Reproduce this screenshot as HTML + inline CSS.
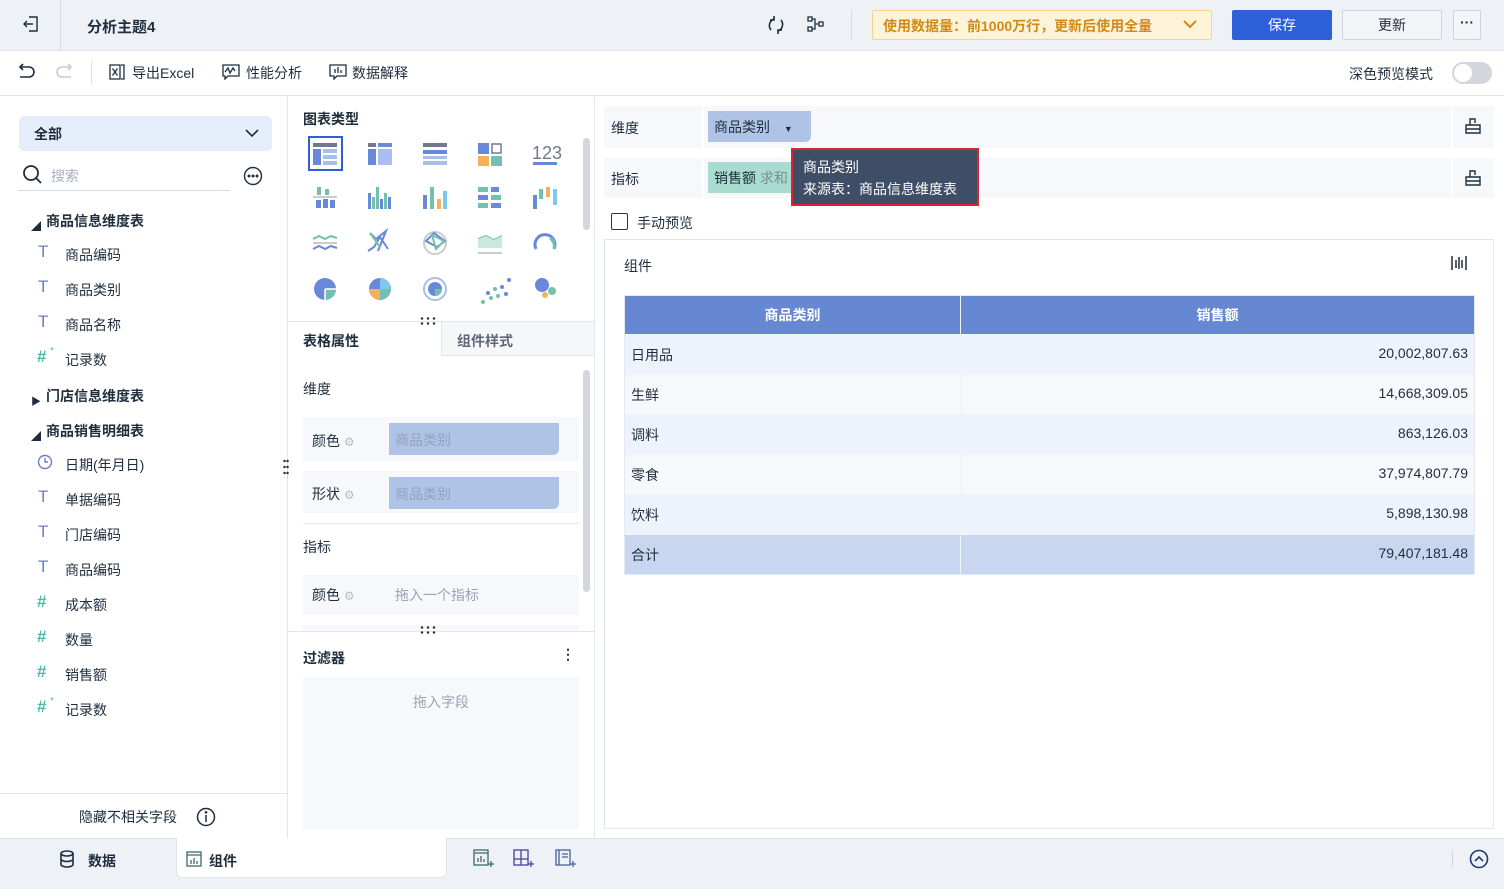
<!DOCTYPE html>
<html><head><meta charset="utf-8">
<style>
*{margin:0;padding:0;box-sizing:border-box}
body{width:1504px;height:889px;position:relative;overflow:hidden;background:#fff;font-family:"Liberation Sans","Noto Sans CJK SC",sans-serif;font-size:14px;color:#1f2d3d}
.a{position:absolute}
.b{font-weight:bold}
.t{white-space:nowrap}
svg{display:block}
</style></head><body>
<!-- top bar -->
<div class="a" style="left:0;top:0;width:1504px;height:51px;background:#eef1f6;border-bottom:1px solid #dfe3ea"></div>
<svg class="a" style="left:22px;top:15px" width="18" height="18" viewBox="0 0 18 18" fill="none" stroke="#1f2d3d" stroke-width="1.4"><path d="M7 2h8v14H7M11 9H2M5 6L2 9l3 3"/></svg>
<div class="a" style="left:60px;top:0;width:1px;height:50px;background:#d6dbe3"></div>
<div class="a b t" style="left:87px;top:16px;font-size:15px">分析主题4</div>
<svg class="a" style="left:766px;top:15px" width="20" height="20" viewBox="0 0 20 20" fill="none" stroke="#1f2d3d" stroke-width="1.6"><path d="M15 5a7 7 0 0 1-3 11M5 15A7 7 0 0 1 8 4"/><path d="M8 1v4H4M12 19v-4h4"/></svg>
<svg class="a" style="left:806px;top:15px" width="20" height="18" viewBox="0 0 20 18" fill="none" stroke="#1f2d3d" stroke-width="1.3"><rect x="2" y="2" width="4" height="4"/><rect x="2" y="12" width="4" height="4"/><rect x="13" y="7" width="4" height="4"/><path d="M6 4h3v10H6M9 9h4"/></svg>
<div class="a" style="left:851px;top:10px;width:1px;height:30px;background:#d6dbe3"></div>
<div class="a t" style="left:872px;top:10px;width:340px;height:30px;background:#fdf3d9;border:1px solid #f5d58a;border-radius:2px;color:#d28a17;font-weight:bold;padding:5px 0 0 10px;font-size:14px">使用数据量：前1000万行，更新后使用全量
<svg class="a" style="left:310px;top:9px" width="14" height="10" viewBox="0 0 14 10" fill="none" stroke="#d28a17" stroke-width="2"><path d="M1 1l6 6 6-6"/></svg></div>
<div class="a t" style="left:1232px;top:10px;width:100px;height:30px;background:#2c5fd8;border-radius:2px;color:#fff;text-align:center;line-height:30px">保存</div>
<div class="a t" style="left:1342px;top:10px;width:100px;height:30px;background:#f3f5f8;border:1px solid #cfd4dc;border-radius:2px;text-align:center;line-height:28px">更新</div>
<div class="a t" style="left:1453px;top:10px;width:28px;height:30px;background:#f3f5f8;border:1px solid #cfd4dc;border-radius:2px;text-align:center;line-height:22px;font-weight:bold">···</div>
<!-- toolbar -->
<div class="a" style="left:0;top:95px;width:1504px;height:1px;background:#e2e6ec"></div>
<svg class="a" style="left:16px;top:63px" width="20" height="18" viewBox="0 0 20 18" fill="none" stroke="#1f2d3d" stroke-width="1.6"><path d="M5 4h8a5 5 0 0 1 0 10H4M7 1L4 4l3 3"/></svg>
<svg class="a" style="left:55px;top:63px" width="20" height="18" viewBox="0 0 20 18" fill="none" stroke="#c8ccd3" stroke-width="1.6"><path d="M15 4H7a5 5 0 0 0 0 10h9M13 1l3 3-3 3"/></svg>
<div class="a" style="left:91px;top:61px;width:1px;height:24px;background:#dfe3ea"></div>
<svg class="a" style="left:109px;top:64px" width="16" height="16" viewBox="0 0 16 16" fill="none" stroke="#1f2d3d" stroke-width="1.3"><path d="M1 1h10v14H1zM12 1h3v14h-3M3.5 4.5l5 7M8.5 4.5l-5 7"/></svg>
<div class="a t" style="left:132px;top:63px">导出Excel</div>
<svg class="a" style="left:222px;top:64px" width="18" height="16" viewBox="0 0 18 16" fill="none" stroke="#1f2d3d" stroke-width="1.3"><path d="M1 1h16v11H6l-3 3v-3H1z"/><path d="M3 8l3-4 2 5 3-5 2 3"/></svg>
<div class="a t" style="left:246px;top:63px">性能分析</div>
<svg class="a" style="left:329px;top:64px" width="18" height="16" viewBox="0 0 18 16" fill="none" stroke="#1f2d3d" stroke-width="1.3"><path d="M1 1h16v11H8l-3 3v-3H1z"/><path d="M6 5v4M9 3v6M12 6v3"/></svg>
<div class="a t" style="left:352px;top:63px">数据解释</div>
<div class="a t" style="left:1349px;top:64px">深色预览模式</div>
<div class="a" style="left:1452px;top:62px;width:40px;height:22px;background:#d3d6dc;border-radius:11px"><div class="a" style="left:2px;top:2px;width:18px;height:18px;border-radius:9px;background:#fff"></div></div>
<!-- left panel -->
<div class="a" style="left:287px;top:96px;width:1px;height:742px;background:#e2e6ec"></div>
<div class="a b" style="left:19px;top:116px;width:253px;height:35px;background:#e5edfb;border-radius:5px;padding:8px 0 0 15px">全部
<svg class="a" style="left:226px;top:13px" width="14" height="9" viewBox="0 0 14 9" fill="none" stroke="#1f2d3d" stroke-width="1.6"><path d="M1 1l6 6 6-6"/></svg></div>
<svg class="a" style="left:22px;top:164px" width="22" height="22" viewBox="0 0 22 22" fill="none" stroke="#1f2d3d" stroke-width="1.8"><circle cx="9" cy="9" r="7"/><path d="M14 14l5 5"/></svg>
<div class="a t" style="left:51px;top:166px;color:#a7afbd">搜索</div>
<div class="a" style="left:18px;top:190px;width:212px;height:1px;background:#d8dce3"></div>
<svg class="a" style="left:243px;top:166px" width="20" height="20" viewBox="0 0 20 20" fill="none" stroke="#1f2d3d" stroke-width="1.4"><circle cx="10" cy="10" r="8.5"/><circle cx="6" cy="10" r=".8" fill="#1f2d3d"/><circle cx="10" cy="10" r=".8" fill="#1f2d3d"/><circle cx="14" cy="10" r=".8" fill="#1f2d3d"/></svg>
<div id="tree"></div>
<div class="a" style="left:0;top:793px;width:287px;height:1px;background:#e2e6ec"></div>
<div class="a t" style="left:79px;top:807px">隐藏不相关字段</div>
<svg class="a" style="left:196px;top:807px" width="20" height="20" viewBox="0 0 20 20" fill="none" stroke="#1f2d3d" stroke-width="1.5"><circle cx="10" cy="10" r="8.5"/><path d="M10 8v7"/><circle cx="10" cy="5.3" r=".6" fill="#1f2d3d"/></svg>
<div class="a" style="left:283px;top:458px;width:6px;height:20px;background:radial-gradient(circle,#333 1px,transparent 1.5px) 0 0/3px 6px"></div>
<!-- middle panel -->
<div class="a" style="left:594px;top:96px;width:1px;height:742px;background:#e2e6ec"></div>
<div class="a b t" style="left:303px;top:109px">图表类型</div>
<div class="a" style="left:308px;top:136px;width:35px;height:35px;border:2px solid #2c5fd8"></div>
<svg class="a" style="left:300px;top:135px" width="270" height="170" viewBox="0 0 270 170">
<g transform="translate(13,8)"><rect width="24" height="4" fill="#6f7a8a"/><rect y="6" width="8" height="16" fill="#6888da"/><rect x="10" y="6" width="14" height="4" fill="#a9bdee"/><rect x="10" y="12" width="14" height="4" fill="#a9bdee"/><rect x="10" y="18" width="14" height="4" fill="#a9bdee"/></g>
<g transform="translate(68,8)"><rect width="8" height="4" fill="#6f7a8a"/><rect x="10" width="14" height="4" fill="#6888da"/><rect y="6" width="8" height="16" fill="#6888da"/><rect x="10" y="6" width="14" height="16" fill="#a9bdee"/></g>
<g transform="translate(123,8)"><rect width="24" height="4" fill="#6f7a8a"/><rect y="7" width="24" height="4" fill="#6888da"/><rect y="13" width="24" height="3" fill="#a9bdee"/><rect y="18" width="24" height="4" fill="#a9bdee"/></g>
<g transform="translate(178,8)"><rect width="11" height="11" fill="#6888da"/><rect x="14" y="1" width="9" height="9" fill="none" stroke="#6f7a8a" stroke-width="1.5"/><rect y="13" width="11" height="10" fill="#f0b25a"/><rect x="13" y="13" width="11" height="10" fill="#74c0b0"/></g>
<text x="232" y="24" font-size="18" fill="#6f7a8a" font-family="Liberation Sans">123</text><rect x="233" y="27" width="24" height="3" fill="#6888da"/>
<g transform="translate(13,52)"><rect x="4" width="4" height="8" fill="#74c0b0"/><rect x="12" y="2" width="4" height="6" fill="#74c0b0"/><rect y="9" width="24" height="2" fill="#ccc"/><rect x="3" y="13" width="5" height="8" fill="#6888da"/><rect x="10" y="12" width="5" height="9" fill="#6888da"/><rect x="17" y="13" width="5" height="8" fill="#6888da"/></g>
<g transform="translate(68,52)"><rect y="6" width="3" height="16" fill="#6888da"/><rect x="4" y="10" width="3" height="12" fill="#74c0b0"/><rect x="8" width="3" height="22" fill="#74c0b0"/><rect x="12" y="12" width="3" height="10" fill="#6888da"/><rect x="16" y="6" width="3" height="16" fill="#74c0b0"/><rect x="20" y="10" width="3" height="12" fill="#6888da"/></g>
<g transform="translate(123,52)"><rect y="8" width="4" height="14" fill="#6888da"/><rect x="7" width="4" height="22" fill="#74c0b0"/><rect x="14" y="12" width="4" height="10" fill="#f0b25a"/><rect x="20" y="4" width="4" height="18" fill="#7ec7ee"/></g>
<g transform="translate(178,52)"><rect width="10" height="5" fill="#74c0b0"/><rect x="13" width="8" height="5" fill="#6888da"/><rect y="8" width="10" height="5" fill="#6888da"/><rect x="13" y="8" width="10" height="5" fill="#74c0b0"/><rect y="16" width="10" height="5" fill="#74c0b0"/><rect x="13" y="16" width="10" height="5" fill="#6888da"/></g>
<g transform="translate(233,52)"><rect y="8" width="4" height="14" fill="#6888da"/><rect x="6" y="2" width="4" height="10" fill="#74c0b0"/><rect x="13" width="4" height="10" fill="#f0b25a"/><rect x="20" y="2" width="4" height="16" fill="#7ec7ee"/></g>
<g fill="none" stroke-width="2"><path d="M13 104l6-3 6 3 6-3 6 2" stroke="#74c0b0"/><path d="M13 108h24" stroke="#ccc"/><path d="M13 114l6-3 6 3 6-3 6 2" stroke="#6888da"/>
<path d="M70 98l6 6 10-8-8 20M68 116l6-4 6-10 8 12" stroke="#6888da"/><path d="M70 98l10 14" stroke="#74c0b0"/>
<circle cx="135" cy="108" r="11" stroke="#ccc"/><path d="M126 106l8-8 11 8-8 6z" stroke="#6888da"/><path d="M132 100l4 14 8-8z" stroke="#74c0b0"/>
<path d="M178 104l8-3 8 4 8-4" stroke="#74c0b0"/><path d="M178 118h24" stroke="#ccc"/>
<path d="M236 114a10 10 0 1 1 18 0" stroke="#6888da" stroke-width="3"/><path d="M250 103a10 10 0 0 1 4 11" stroke="#74c0b0" stroke-width="3"/></g>
<path d="M178 104l8-3 8 4 8-4v12h-24z" fill="#c8e8e0"/>
<circle cx="25" cy="154" r="11" fill="#6888da"/><path d="M25 154h11a11 11 0 0 1-11 11z" fill="#74c0b0"/><path d="M25 154h11M25 154v11" stroke="#fff" stroke-width="1.5"/>
<circle cx="80" cy="154" r="11" fill="#6888da"/><path d="M80 154V143a11 11 0 0 1 11 11z" fill="#7ec7ee"/><path d="M80 154h-11a11 11 0 0 0 11 11z" fill="#f0b25a"/><path d="M80 154h11a11 11 0 0 1-11 11z" fill="#74c0b0"/>
<circle cx="135" cy="154" r="11" fill="none" stroke="#a9bdee" stroke-width="2"/><circle cx="135" cy="154" r="7" fill="#6888da"/><path d="M135 154h7a7 7 0 0 1-7 7z" fill="#74c0b0"/>
<g fill="#6888da"><circle cx="209" cy="145" r="2"/><circle cx="202" cy="152" r="2"/><circle cx="206" cy="159" r="2"/><circle cx="188" cy="158" r="2"/></g><g fill="#74c0b0"><circle cx="195" cy="154" r="2"/><circle cx="198" cy="161" r="2"/><circle cx="191" cy="163" r="2"/><circle cx="183" cy="167" r="2"/></g>
<circle cx="242" cy="150" r="7" fill="#6888da"/><circle cx="252" cy="156" r="4" fill="#74c0b0"/><circle cx="245" cy="160" r="3" fill="#f0b25a"/>
</svg>
<div class="a" style="left:583px;top:138px;width:7px;height:92px;background:#d3d6dc;border-radius:4px"></div>
<div class="a" style="left:288px;top:321px;width:306px;height:1px;background:#e2e6ec"></div>
<div class="a" style="left:419px;top:316px;width:18px;height:10px;background:radial-gradient(circle,#333 1px,transparent 1.5px) 0 0/6px 5px"></div>
<div class="a" style="left:441px;top:322px;width:153px;height:34px;background:#f5f7fa;border-left:1px solid #e2e6ec;border-bottom:1px solid #e2e6ec"></div>
<div class="a b t" style="left:303px;top:331px">表格属性</div>
<div class="a b t" style="left:457px;top:331px;color:#5e6878">组件样式</div>
<div class="a t" style="left:303px;top:379px">维度</div>
<div class="a" style="left:303px;top:417px;width:276px;height:44px;background:#f7f8fb"></div>
<div class="a t" style="left:312px;top:431px">颜色 <span style="color:#bbb;font-size:12px">⚙</span></div>
<div class="a t" style="left:389px;top:423px;width:170px;height:32px;background:#aec3e6;border-radius:0 0 6px 0;color:#93a3bd;padding:7px 0 0 6px">商品类别</div>
<div class="a" style="left:303px;top:471px;width:276px;height:42px;background:#f7f8fb"></div>
<div class="a t" style="left:312px;top:484px">形状 <span style="color:#bbb;font-size:12px">⚙</span></div>
<div class="a t" style="left:389px;top:477px;width:170px;height:32px;background:#aec3e6;border-radius:0 0 6px 0;color:#93a3bd;padding:7px 0 0 6px">商品类别</div>
<div class="a" style="left:303px;top:523px;width:276px;height:1px;background:#e2e6ec"></div>
<div class="a t" style="left:303px;top:537px">指标</div>
<div class="a" style="left:303px;top:575px;width:276px;height:40px;background:#f7f8fb"></div>
<div class="a t" style="left:312px;top:585px">颜色 <span style="color:#bbb;font-size:12px">⚙</span></div>
<div class="a t" style="left:395px;top:585px;color:#9aa3b2">拖入一个指标</div>
<div class="a" style="left:303px;top:625px;width:276px;height:6px;background:#f7f8fb"></div>
<div class="a" style="left:583px;top:370px;width:7px;height:222px;background:#d3d6dc;border-radius:4px"></div>
<div class="a" style="left:288px;top:631px;width:306px;height:1px;background:#e2e6ec"></div>
<div class="a" style="left:419px;top:625px;width:18px;height:10px;background:radial-gradient(circle,#333 1px,transparent 1.5px) 0 0/6px 5px"></div>
<div class="a b t" style="left:303px;top:648px">过滤器</div>
<div class="a b" style="left:561px;top:646px">⋮</div>
<div class="a t" style="left:303px;top:677px;width:276px;height:152px;background:#f7f8fb;color:#9aa3b2;text-align:center;padding-top:15px">拖入字段</div>
<!-- right area -->
<div class="a" style="left:604px;top:106px;width:890px;height:42px;background:#f7f8fb"></div>
<div class="a t" style="left:611px;top:118px">维度</div>
<div class="a" style="left:702px;top:106px;width:2px;height:42px;background:#fff"></div>
<div class="a t" style="left:708px;top:111px;width:103px;height:31px;background:#aec3e6;border-radius:0 0 6px 0;padding:6px 0 0 6px">商品类别 <span style="font-size:9px;margin-left:10px">▼</span></div>
<div class="a" style="left:1451px;top:106px;width:2px;height:42px;background:#fff"></div>
<div class="a" style="left:604px;top:158px;width:890px;height:40px;background:#f7f8fb"></div>
<div class="a t" style="left:611px;top:169px">指标</div>
<div class="a" style="left:702px;top:158px;width:2px;height:40px;background:#fff"></div>
<div class="a t" style="left:708px;top:162px;width:90px;height:31px;background:#a8dcd1;padding:6px 0 0 6px;overflow:hidden">销售额 <span style="color:#7f8c8d">求和</span></div>
<div class="a" style="left:1451px;top:158px;width:2px;height:40px;background:#fff"></div>
<svg class="a" style="left:1464px;top:117px" width="18" height="18" viewBox="0 0 18 18" fill="none" stroke="#1f2d3d" stroke-width="1.4"><path d="M2 8h14v8H2zM6 8V2h5v4M2 12h14"/></svg>
<svg class="a" style="left:1464px;top:169px" width="18" height="18" viewBox="0 0 18 18" fill="none" stroke="#1f2d3d" stroke-width="1.4"><path d="M2 8h14v8H2zM6 8V2h5v4M2 12h14"/></svg>
<div class="a t" style="left:791px;top:148px;width:188px;height:58px;background:#3e4e66;border:2px solid #e0242e;color:#fff;padding:6px 0 0 10px;line-height:22px">商品类别<br>来源表：商品信息维度表</div>
<div class="a" style="left:611px;top:213px;width:17px;height:17px;border:1.5px solid #333;border-radius:2px;background:#fff"></div>
<div class="a t" style="left:637px;top:213px">手动预览</div>
<div class="a" style="left:604px;top:239px;width:890px;height:590px;border:1px solid #e2e6ec"></div>
<div class="a t" style="left:624px;top:256px">组件</div>
<svg class="a" style="left:1450px;top:254px" width="18" height="18" viewBox="0 0 18 18" stroke="#1f2d3d" stroke-width="1.5"><path d="M2 2v14M6 6v8M9 3v12M12 6v8M16 2v14"/></svg>
<div class="a" style="left:624px;top:295px;width:851px;height:280px;background:#eef2fa;border:1px solid #e4e8f0"></div>
<div class="a b" style="left:625px;top:296px;width:335px;height:38px;background:#6688d2;color:#fff;text-align:center;line-height:38px">商品类别</div>
<div class="a b" style="left:961px;top:296px;width:513px;height:38px;background:#6688d2;color:#fff;text-align:center;line-height:38px">销售额</div>
<div id="rows"></div>
<!-- bottom -->
<div class="a" style="left:0;top:838px;width:1504px;height:51px;background:#eef1f6;border-top:1px solid #dfe3ea"></div>
<div class="a" style="left:176px;top:838px;width:271px;height:40px;background:#fff;border:1px solid #dfe3ea;border-top:none;border-radius:0 0 6px 6px"></div>
<svg class="a" style="left:59px;top:850px" width="16" height="18" viewBox="0 0 16 18" fill="none" stroke="#1f2d3d" stroke-width="1.6"><ellipse cx="8" cy="3.5" rx="6" ry="2.5"/><path d="M2 3.5v11c0 1.4 2.7 2.5 6 2.5s6-1.1 6-2.5v-11M2 9c0 1.4 2.7 2.5 6 2.5s6-1.1 6-2.5"/></svg>
<div class="a b t" style="left:88px;top:851px">数据</div>
<svg class="a" style="left:186px;top:851px" width="16" height="16" viewBox="0 0 16 16" fill="none" stroke="#3a6b66" stroke-width="1.3"><rect x="1" y="1" width="14" height="14"/><path d="M1 4h14M5 13V9M8 13V7M11 13v-3"/></svg>
<div class="a b t" style="left:209px;top:851px">组件</div>
<svg class="a" style="left:473px;top:849px" width="22" height="20" viewBox="0 0 22 20" fill="none" stroke="#3a6b66" stroke-width="1.3"><rect x="1" y="1" width="14" height="15"/><path d="M1 4h14M5 13V9M8 13V7M11 13v-3M15 15h6M18 12v6"/></svg>
<svg class="a" style="left:513px;top:849px" width="22" height="20" viewBox="0 0 22 20" fill="none" stroke="#4a3fa0" stroke-width="1.3"><rect x="1" y="1" width="14" height="15"/><path d="M1 10h14M8 1v15M15 15h6M18 12v6"/></svg>
<svg class="a" style="left:555px;top:849px" width="22" height="20" viewBox="0 0 22 20" fill="none" stroke="#4a5f9a" stroke-width="1.3"><rect x="1" y="1" width="14" height="15"/><path d="M4 1v15M7 5h6M7 8h6M15 15h6M18 12v6"/></svg>
<div class="a" style="left:1452px;top:851px;width:1px;height:16px;background:#cfd4dc"></div>
<svg class="a" style="left:1469px;top:849px" width="20" height="20" viewBox="0 0 20 20" fill="none" stroke="#1f3c6e" stroke-width="1.6"><circle cx="10" cy="10" r="8.5"/><path d="M6 12l4-4 4 4"/></svg>
<script>
var tree=[["h","商品信息维度表",220,"d"],["T","商品编码",254],["T","商品类别",289],["T","商品名称",324],["#*","记录数",359],["h","门店信息维度表",395,"r"],["h","商品销售明细表",430,"d"],["C","日期(年月日)",464],["T","单据编码",499],["T","门店编码",534],["T","商品编码",569],["#","成本额",604],["#","数量",639],["#","销售额",674],["#*","记录数",709]];
var h="";tree.forEach(function(r){var y=r[2];if(r[0]=="h"){h+='<div class="a" style="left:31px;top:'+(y-2)+'px;font-size:10px">'+(r[3]=="d"?'◢':'▶')+'</div><div class="a b t" style="left:46px;top:'+(y-9)+'px">'+r[1]+'</div>';}else{var ic;if(r[0]=="T")ic='<div class="a" style="left:38px;top:'+(y-12)+'px;color:#6c7fc4;font-size:17px">T</div>';else if(r[0]=="C")ic='<svg class="a" style="left:37px;top:'+(y-10)+'px" width="16" height="16" viewBox="0 0 16 16" fill="none" stroke="#6c7fc4" stroke-width="1.4"><circle cx="8" cy="8" r="6.5"/><path d="M8 4v4h3"/></svg>';else ic='<div class="a b" style="left:37px;top:'+(y-12)+'px;color:#4fb8a8;font-size:17px">#</div>'+(r[0]=="#*"?'<div class="a" style="left:50px;top:'+(y-13)+'px;color:#4fb8a8;font-size:10px">*</div>':'');h+=ic+'<div class="a t" style="left:65px;top:'+(y-9)+'px">'+r[1]+'</div>';}});
document.getElementById("tree").innerHTML=h;
var rows=[["日用品","20,002,807.63"],["生鲜","14,668,309.05"],["调料","863,126.03"],["零食","37,974,807.79"],["饮料","5,898,130.98"],["合计","79,407,181.48"]];
h="";rows.forEach(function(r,i){var y=335+i*40;var bg=i==5?"#c8d6ef":(i%2?"#f6f8fc":"#eef2fa");h+='<div class="a t" style="left:625px;top:'+y+'px;width:335px;height:39px;background:'+bg+';padding:10px 0 0 6px">'+r[0]+'</div><div class="a t" style="left:961px;top:'+y+'px;width:513px;height:39px;background:'+bg+';padding:10px 6px 0 0;text-align:right">'+r[1]+'</div>';});
document.getElementById("rows").innerHTML=h;
</script>
</body></html>
